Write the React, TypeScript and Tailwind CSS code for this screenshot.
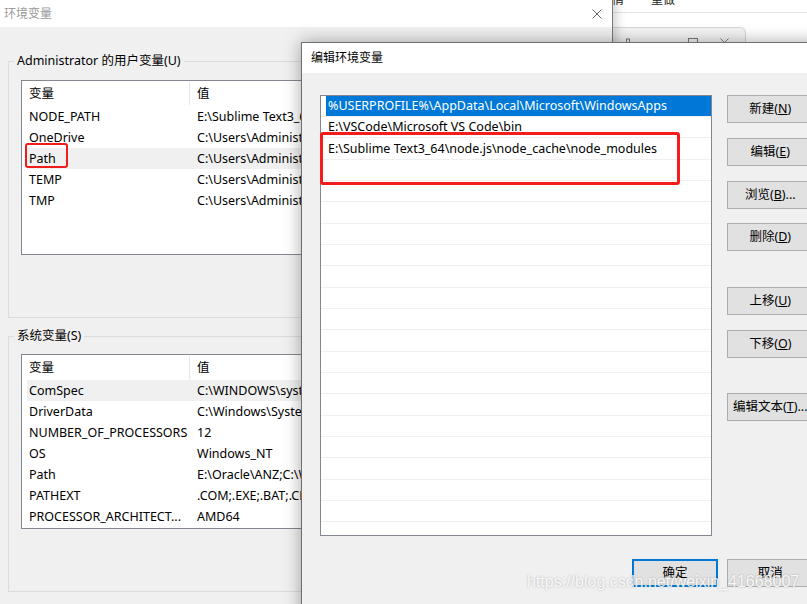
import React from 'react'

const ui = "[font-family:'Noto_Sans','Noto_Sans_CJK_SC',sans-serif]"

const userVars = [
  ['NODE_PATH', 'E:\\Sublime Text3_64\\node.js\\node_global\\node_modules'],
  ['OneDrive', 'C:\\Users\\Administrator\\OneDrive'],
  ['Path', 'C:\\Users\\Administrator\\AppData\\Local\\Microsoft\\WindowsApps;'],
  ['TEMP', 'C:\\Users\\Administrator\\AppData\\Local\\Temp'],
  ['TMP', 'C:\\Users\\Administrator\\AppData\\Local\\Temp'],
]

const sysVars = [
  ['ComSpec', 'C:\\WINDOWS\\system32\\cmd.exe'],
  ['DriverData', 'C:\\Windows\\System32\\Drivers\\DriverData'],
  ['NUMBER_OF_PROCESSORS', '12'],
  ['OS', 'Windows_NT'],
  ['Path', 'E:\\Oracle\\ANZ;C:\\WINDOWS\\system32;C:\\WINDOWS'],
  ['PATHEXT', '.COM;.EXE;.BAT;.CMD;.VBS;.VBE;.JS;.JSE'],
  ['PROCESSOR_ARCHITECT...', 'AMD64'],
]

const paths = [
  '%USERPROFILE%\\AppData\\Local\\Microsoft\\WindowsApps',
  'E:\\VSCode\\Microsoft VS Code\\bin',
  'E:\\Sublime Text3_64\\node.js\\node_cache\\node_modules',
]

function CloseX({ className = '' }: { className?: string }) {
  return (
    <svg viewBox="0 0 10 10" className={className} fill="none" stroke="currentColor" strokeWidth="1">
      <path d="M0.5 0.5l9 9M9.5 0.5l-9 9" />
    </svg>
  )
}

function VarList({ rows, hot, boxed, h }: { rows: string[][]; hot: number; boxed?: number; h: string }) {
  return (
    <div className={`ml-[12px] w-[560px] overflow-hidden border border-[#828790] bg-white ${h}`}>
      <div className="flex h-[25px] items-center pl-[5px]">
        <div className="flex h-[23px] w-[163px] items-center border-r border-[#e5e5e5] pl-[2px]">变量</div>
        <div className="pl-[7px]">值</div>
      </div>
      {rows.map(([k, v], i) => (
        <div
          key={k + i}
          className={`relative ml-[5px] flex h-[21px] items-center ${i === hot ? 'bg-[#f0f0f0]' : ''}`}
        >
          <div className="w-[163px] shrink-0 whitespace-nowrap pl-[2px]">{k}</div>
          <div className="whitespace-nowrap pl-[7px]">{v}</div>
          {boxed === i && (
            <span className="absolute left-[-2px] top-[-5px] h-[25px] w-[43px] rounded-[3px] border-[2.5px] border-[#f01c1c]" />
          )}
        </div>
      ))}
    </div>
  )
}

function Btn({ children, className = '', primary = false }: { children: React.ReactNode; className?: string; primary?: boolean }) {
  return (
    <button
      type="button"
      className={`flex h-[28px] w-[86px] shrink-0 items-center justify-center whitespace-nowrap bg-[#e1e1e1] text-black ${
        primary ? 'border-2 border-[#0078d7]' : 'border border-[#adadad]'
      } ${className}`}
    >
      {children}
    </button>
  )
}

export default function App() {
  return (
    <div className={`relative h-[604px] w-[807px] overflow-hidden bg-white text-[12.5px] leading-[16px] text-black ${ui}`}>
      {/* app behind, top right */}
      <div className="absolute left-[612px] right-0 top-0 h-[80px] bg-white">
        <div className="-mt-[14px] flex h-[22px] items-end text-[12px] text-[#222]">
          <span>情</span>
          <span className="ml-[27px]">重做</span>
        </div>
        <div className="mt-[4px] h-px bg-[#e3e3e3]" />
        <div className="mt-[14px] flex h-[30px] w-[134px] items-start gap-[22px] rounded-tr-[6px] border-r border-t border-[#d6d6d6] bg-[#f4f4f4] pl-[10px] pt-[10px] text-[#777]">
          <svg viewBox="0 0 12 12" className="h-[12px] w-[12px]" fill="none" stroke="currentColor">
            <path d="M4 1h4M4.5 1v4L3 7h6L7.5 5V1M6 7v4" />
          </svg>
          <span className="mt-[5px] h-px w-[10px] bg-[#777]" />
          <span className="h-[10px] w-[10px] border border-[#777]" />
          <CloseX className="h-[9px] w-[9px]" />
        </div>
      </div>

      {/* 环境变量 window */}
      <div className="absolute left-0 top-0 flex h-[604px] w-[613px] flex-col border-r border-[#7a7a7a] bg-[#f0f0f0] shadow-[3px_0_10px_rgba(0,0,0,0.2)]">
        <div className="flex h-[27px] shrink-0 items-center justify-between bg-white pl-[4px] pr-[10px] text-[12px] text-[#9a9a9a]">
          <span>环境变量</span>
          <CloseX className="h-[10px] w-[10px] text-[#666]" />
        </div>
        <div className="px-[8px]">
          <fieldset className="mt-[26px] h-[265px] border border-[#dcdcdc]">
            <legend className="ml-[5px] px-[3px] leading-[16px]">Administrator 的用户变量(U)</legend>
            <div className="mt-[11px]">
              <VarList rows={userVars} hot={2} boxed={2} h="h-[175px]" />
            </div>
          </fieldset>
          <fieldset className="mt-[10px] h-[264px] border border-[#dcdcdc]">
            <legend className="ml-[5px] px-[3px] leading-[16px]">系统变量(S)</legend>
            <div className="mt-[10px]">
              <VarList rows={sysVars} hot={0} h="h-[175px]" />
            </div>
          </fieldset>
        </div>
      </div>

      {/* 编辑环境变量 dialog */}
      <div className="absolute left-[301px] top-[42px] flex h-[600px] w-[540px] flex-col border border-[#6f6f6f] bg-[#f0f0f0] shadow-[0_0_16px_rgba(0,0,0,0.35)]">
        <div className="flex h-[30px] shrink-0 items-center bg-white pl-[9px] text-[12px]">编辑环境变量</div>
        <div className="flex pl-[18px] pt-[21.7px]">
          <div className="relative">
            <div className="h-[441px] w-[392px] overflow-hidden border border-[#828790] bg-white">
              {Array.from({ length: 21 }).map((_, i) => (
                <div key={i} className="h-[21.33px] border-b border-[#f0f0f0]">
                  <div
                    className={`ml-[5px] flex h-full items-center whitespace-nowrap pl-[2px] ${
                      i === 0 ? 'bg-[#0078d7] text-white' : ''
                    }`}
                  >
                    {paths[i] ?? ''}
                  </div>
                </div>
              ))}
            </div>
            <span className="absolute left-0 top-[37px] h-[53.5px] w-[360px] rounded-[3px] border-[3.5px] border-[#f41d1d]" />
          </div>
          <div className="ml-[15.3px] flex flex-col">
            <Btn>
              新建(<u>N</u>)
            </Btn>
            <Btn className="mt-[15.3px]">
              编辑(<u>E</u>)
            </Btn>
            <Btn className="mt-[14.7px]">
              浏览(<u>B</u>)...
            </Btn>
            <Btn className="mt-[14.7px]">
              删除(<u>D</u>)
            </Btn>
            <Btn className="mt-[36px]">
              上移(<u>U</u>)
            </Btn>
            <Btn className="mt-[14.7px]">
              下移(<u>O</u>)
            </Btn>
            <Btn className="mt-[35.3px]">
              编辑文本(<u>T</u>)...
            </Btn>
          </div>
        </div>
        <div className="mt-[23px] flex gap-[9.3px] pl-[330px]">
          <Btn primary>确定</Btn>
          <Btn>取消</Btn>
        </div>
      </div>

      {/* watermark */}
      <div className="pointer-events-none absolute left-[527px] top-[573px] whitespace-nowrap text-[16px] leading-[18px] text-white/90 [font-family:'Liberation_Sans',Arial,sans-serif] [text-shadow:0_0_2px_rgba(0,0,0,0.3)]">
        https://blog.csdn.net/weixin_41668007
      </div>
    </div>
  )
}
